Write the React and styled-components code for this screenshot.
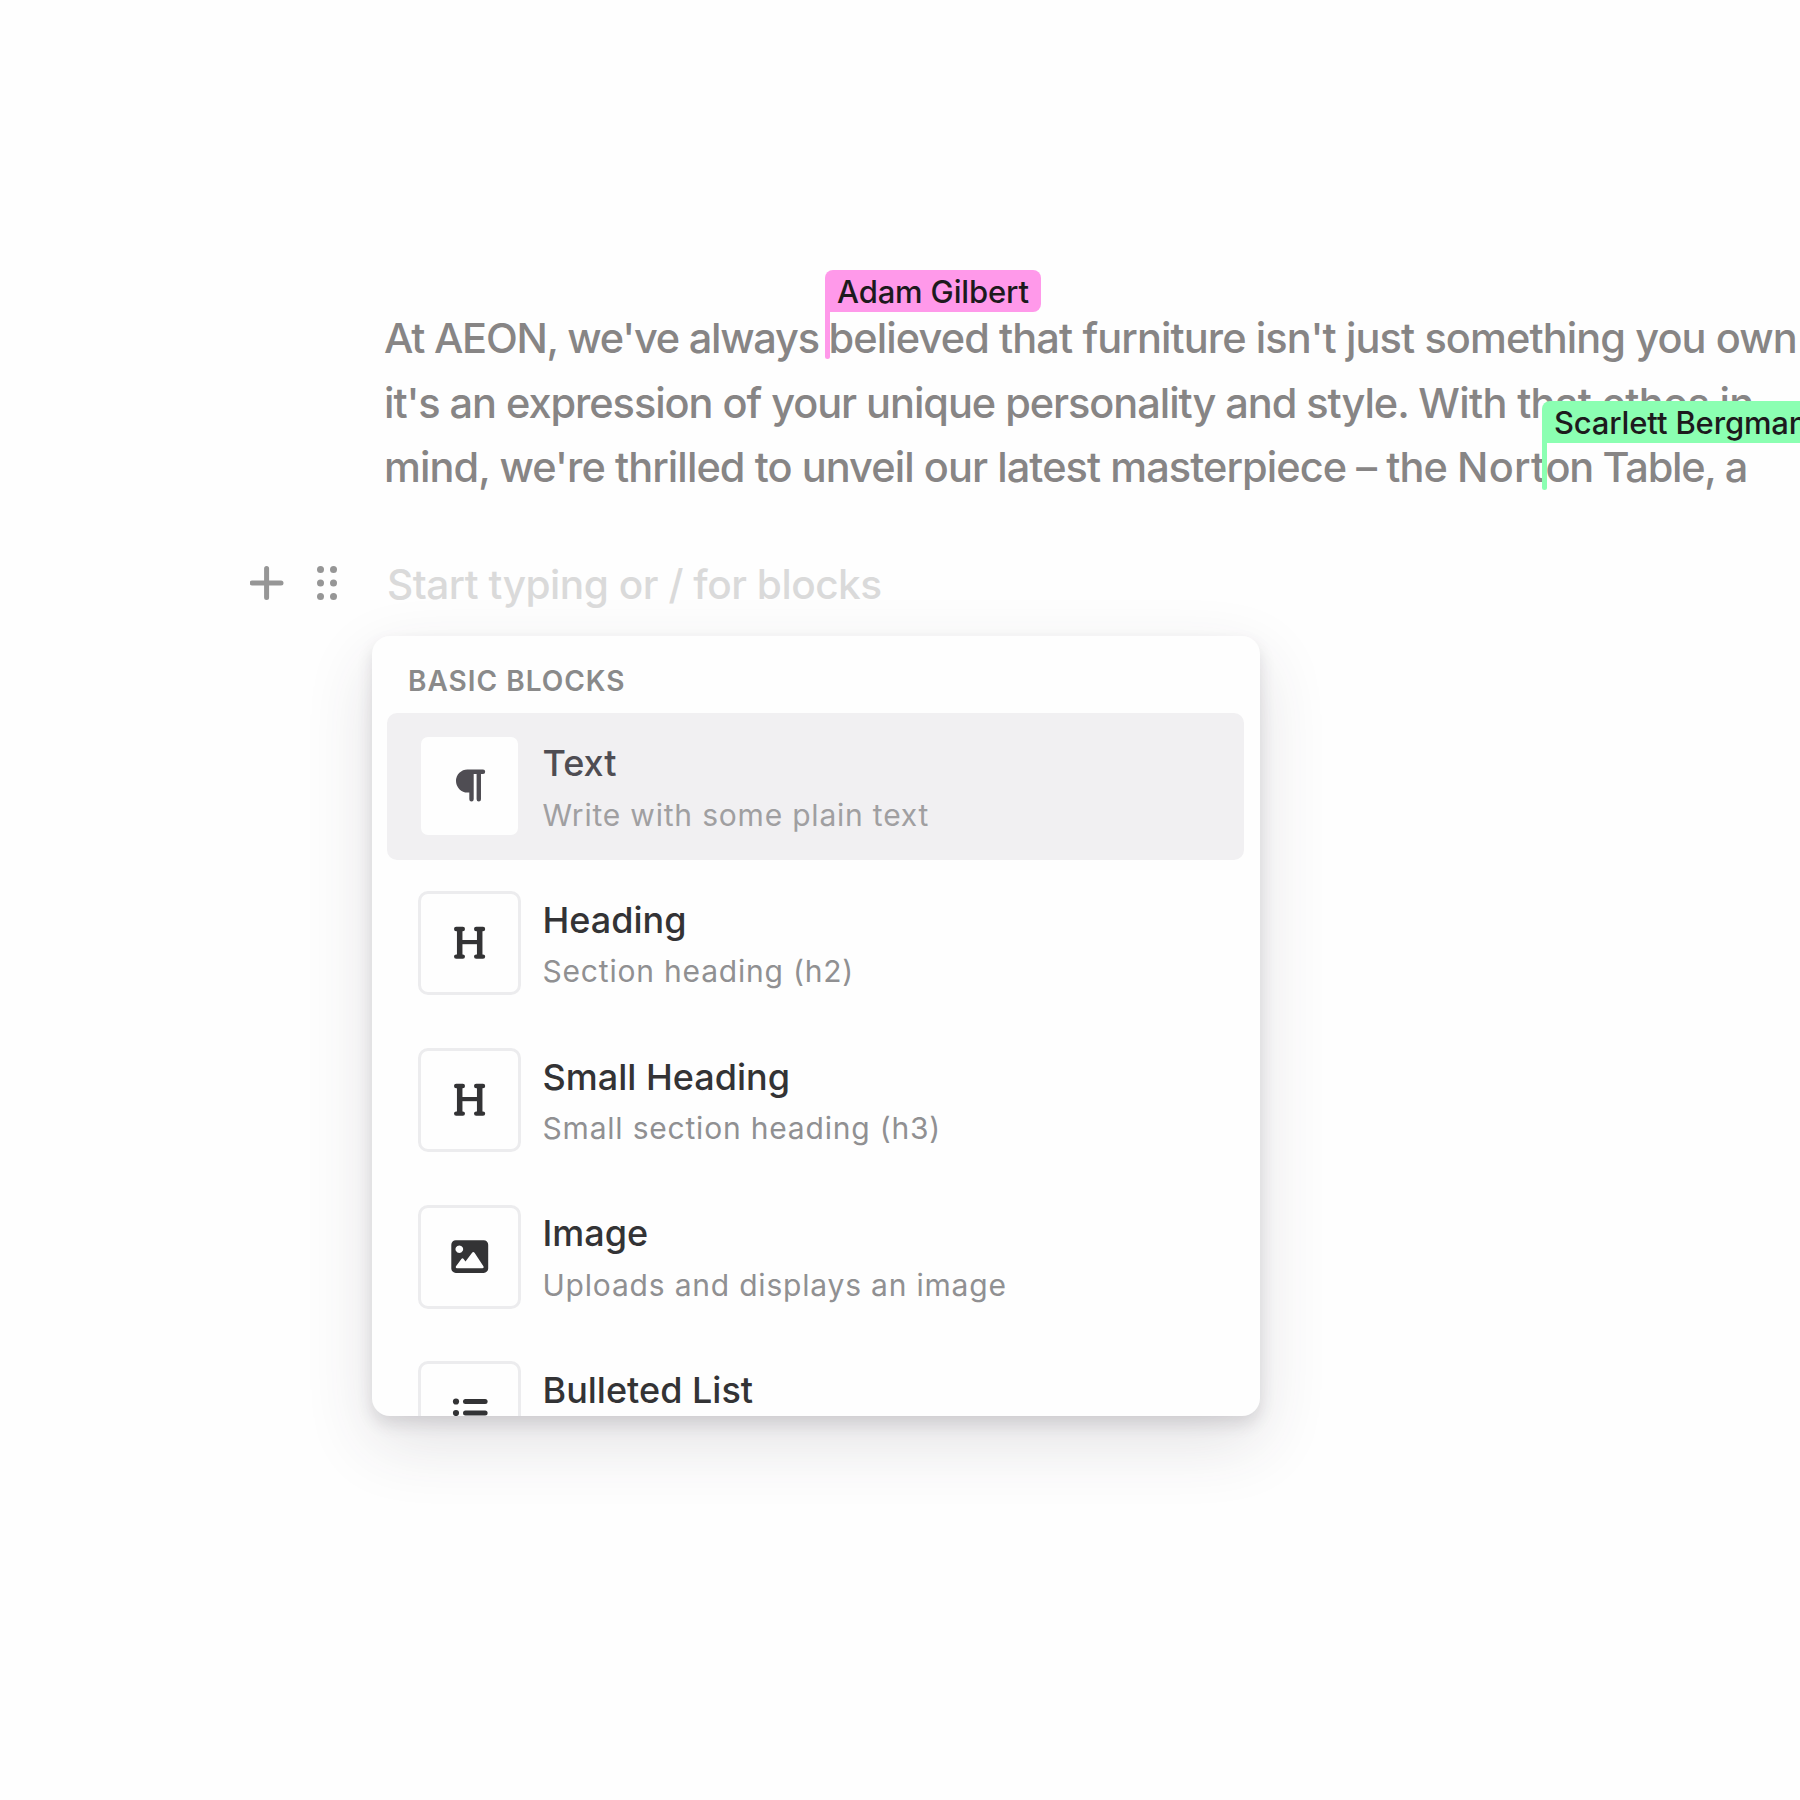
import React from "react";
import styled, { createGlobalStyle } from "styled-components";

const Global = createGlobalStyle`
  body { margin: 0; background: #fefefe; }
  * { box-sizing: border-box; }
`;

const Page = styled.main`
  width: 1800px;
  height: 1800px;
  overflow: hidden;
  padding: 306.1px 0 0 250px;
  font-family: "Inter", "Liberation Sans", sans-serif;
`;

const Paragraph = styled.p`
  margin: 0;
  padding-left: 134px;
  color: #878585;
  font-size: 41.5px;
  font-weight: 500;
  line-height: 64.5px;
  white-space: nowrap;
`;

const Line = styled.span`
  display: block;
  width: max-content;
`;

const Run = styled.span`
  letter-spacing: ${(p) => p.$spacing}px;
`;

const Caret = styled.span`
  position: relative;
`;

const CaretBar = styled.span`
  position: absolute;
  left: -3.5px;
  top: ${(p) => 20 - p.$lift}px;
  width: 5px;
  height: 69px;
  border-radius: 0 0 3px 3px;
  background: ${(p) => p.$color};
`;

const CaretName = styled.span`
  position: absolute;
  left: -3.5px;
  top: ${(p) => -p.$lift}px;
  width: max-content;
  height: 42px;
  padding: 0 12px;
  border-radius: 8px 8px 8px 0;
  background: ${(p) => p.$color};
  color: #1d1a1d;
  font-size: 31px;
  font-weight: 500;
  line-height: 43px;
  letter-spacing: -0.15px;
`;

const EmptyBlock = styled.div`
  display: flex;
  align-items: center;
  height: 60px;
  margin-top: 53.4px;
`;

const Placeholder = styled.span`
  margin-left: 50px;
  padding-top: 4px;
  color: #dadada;
  font-size: 40.6px;
  font-weight: 500;
  line-height: 58px;
  letter-spacing: -0.47px;
`;

const DragHandle = styled.svg`
  margin-left: 32px;
`;

const Menu = styled.section`
  width: 888px;
  height: 780px;
  margin: 23px 0 0 122px;
  padding: 0 16px;
  overflow: hidden;
  border-radius: 18px;
  background: #fefefe;
  box-shadow: 0 8px 16px rgba(60, 50, 65, 0.14), 0 26px 68px rgba(60, 50, 65, 0.14);
`;

const MenuTitle = styled.h2`
  margin: 0;
  padding: 25px 0 0 20px;
  height: 77px;
  color: #8a8a8a;
  font-size: 28px;
  font-weight: 600;
  line-height: 40px;
  letter-spacing: 1px;
`;

const Item = styled.div`
  display: flex;
  align-items: flex-start;
  width: 857px;
  height: 147px;
  margin: 0 0 9.7px -1px;
  padding: 21.5px 0 0 31px;
  border-radius: 10px;
  background: ${(p) => (p.$active ? "#f1f0f2" : "transparent")};
  color: ${(p) => (p.$active ? "#4f4d53" : "#333335")};
`;

const IconTile = styled.div`
  display: flex;
  align-items: center;
  justify-content: center;
  flex: none;
  width: 103px;
  height: 104px;
  border: 3px solid ${(p) => (p.$active ? "#f1f0f2" : "#ececee")};
  border-radius: 10px;
  background: #fefefe;
`;

const ItemText = styled.div`
  padding: 5.8px 0 0 21.5px;
`;

const ItemName = styled.div`
  font-size: 36px;
  font-weight: 500;
  line-height: 46px;
  letter-spacing: 0;
`;

const ItemHint = styled.div`
  margin-top: 6.5px;
  color: ${(p) => (p.$active ? "#a09fa1" : "#909092")};
  font-size: 30px;
  line-height: 44px;
  letter-spacing: 0.8px;
`;

const TextIcon = () => (
  <svg width="40" height="40" viewBox="0 0 40 40" fill="currentColor">
    <path d="M17.5 3.5H33a2.2 2.2 0 0 1 0 4.4H31V33.2a2.2 2.2 0 0 1-4.4 0V8H23.7V33.2a2.2 2.2 0 0 1-4.4 0V26.5H17.5A11.5 11.5 0 0 1 17.5 3.5Z" />
  </svg>
);

const HeadingIcon = () => (
  <svg width="40" height="40" viewBox="0 0 40 40" fill="none" stroke="currentColor" strokeLinecap="round">
    <path strokeWidth="4.4" d="M6.2 6H12.8M26.2 6H33M6.2 33.6H12.8M26.2 33.6H33" />
    <path strokeWidth="5.5" strokeLinecap="butt" d="M9.7 6V33.6M29.7 6V33.6" />
    <path strokeWidth="4.2" strokeLinecap="butt" d="M9.7 19.1H29.7" />
  </svg>
);

const ImageIcon = () => (
  <svg width="40" height="40" viewBox="0 0 40 40" fill="currentColor">
    <path
      fillRule="evenodd"
      d="M5.8 3.2H33.7a4.5 4.5 0 0 1 4.5 4.5V31.4a4.5 4.5 0 0 1-4.5 4.5H5.8a4.5 4.5 0 0 1-4.5-4.5V7.7A4.5 4.5 0 0 1 5.8 3.2ZM9.3 8.4a3.8 3.8 0 1 0 .01 0ZM6 29.2L11.4 22Q12.5 20.6 13.6 22L15.5 24.5L21.9 16Q23.3 14.2 24.7 16L33.4 29.2Q34.2 31.2 32.3 31.2H7Q5.2 31 6 29.2Z"
    />
  </svg>
);

const ListIcon = () => (
  <svg width="40" height="40" viewBox="0 0 40 40" fill="currentColor">
    {[8.5, 20, 31.5].map((y) => (
      <g key={y}>
        <circle cx="6" cy={y} r="3.1" />
        <rect x="13" y={y - 2.5} width="24.6" height="5" rx="2.5" />
      </g>
    ))}
  </svg>
);

const ITEMS = [
  { name: "Text", hint: "Write with some plain text", Icon: TextIcon, active: true },
  { name: "Heading", hint: "Section heading (h2)", Icon: HeadingIcon },
  { name: "Small Heading", hint: "Small section heading (h3)", Icon: HeadingIcon },
  { name: "Image", hint: "Uploads and displays an image", Icon: ImageIcon },
  { name: "Bulleted List", hint: "", Icon: ListIcon },
];

function Collaborator({ name, color, lift }) {
  return (
    <Caret>
      <CaretBar $color={color} $lift={lift} />
      <CaretName $color={color} $lift={lift}>{name}</CaretName>
    </Caret>
  );
}

export default function App() {
  return (
    <Page>
      <Global />
      <Paragraph>
        <Line>
          <Run $spacing={-1.25}>At AEON, we've always </Run>
          <Collaborator name="Adam Gilbert" color="#ff99ea" lift={43.5} />
          <Run $spacing={-0.91}>believed that furniture isn't just something you own</Run>
        </Line>
        <Line>
          <Run $spacing={-1.06}>it's an expression of your unique personality and style. </Run>
          <Run $spacing={-0.68}>With that ethos in</Run>
        </Line>
        <Line>
          <Run $spacing={-0.94}>mind, we're thrilled to unveil our latest masterpiece – the </Run>
          <Run $spacing={0.25}>Nort</Run>
          <Collaborator name="Scarlett Bergman" color="#8bffb2" lift={40.9} />
          <Run $spacing={-1.3}>on Table, a</Run>
        </Line>
      </Paragraph>
      <EmptyBlock>
        <svg width="34" height="34" viewBox="0 0 34 34" stroke="#969696" strokeWidth="5" strokeLinecap="round">
          <path d="M16.6 2.5V31.5M2.2 17H31" />
        </svg>
        <DragHandle width="21" height="36" viewBox="0 0 21 36" fill="#969696">
          {[4.5, 18, 31.5].map((y) => (
            <g key={y}>
              <circle cx="4.5" cy={y} r="3.5" />
              <circle cx="17.5" cy={y} r="3.5" />
            </g>
          ))}
        </DragHandle>
        <Placeholder>Start typing or / for blocks</Placeholder>
      </EmptyBlock>
      <Menu>
        <MenuTitle>BASIC BLOCKS</MenuTitle>
        {ITEMS.map(({ name, hint, Icon, active }) => (
          <Item key={name} $active={active}>
            <IconTile $active={active}>
              <Icon />
            </IconTile>
            <ItemText>
              <ItemName>{name}</ItemName>
              {hint && <ItemHint $active={active}>{hint}</ItemHint>}
            </ItemText>
          </Item>
        ))}
      </Menu>
    </Page>
  );
}
